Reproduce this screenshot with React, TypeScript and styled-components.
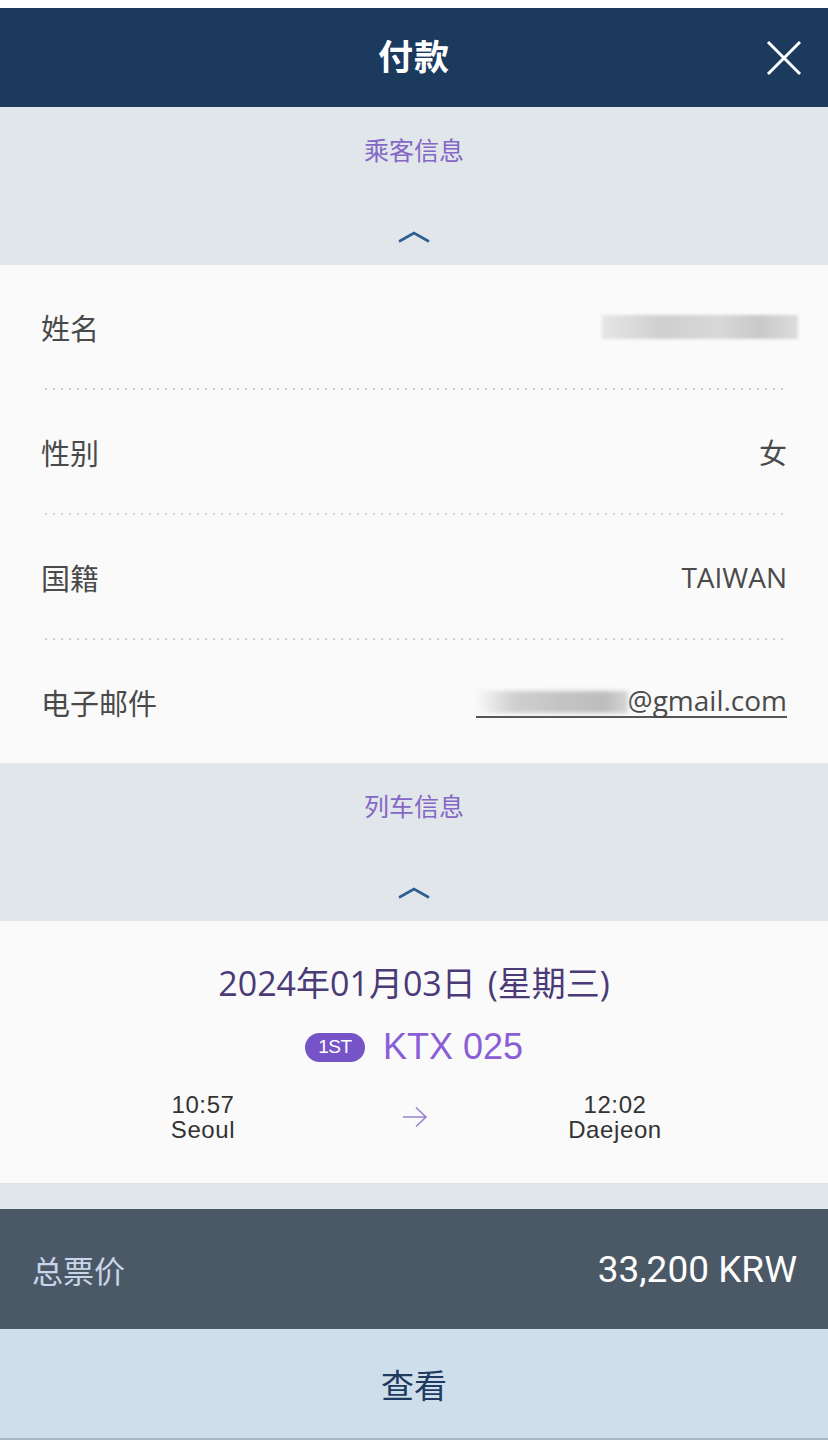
import React from "react";
import styled, { createGlobalStyle } from "styled-components";

const Global = createGlobalStyle`
  html, body { margin: 0; padding: 0; background: #ffffff; }
  body { font-family: Roboto, "Noto Sans CJK SC", sans-serif; }
  * { box-sizing: border-box; }
`;

const Page = styled.div`
  width: 828px;
  padding-top: 8px;
  background: #ffffff;
  display: flex;
  flex-direction: column;
`;

const Header = styled.header`
  position: relative;
  height: 99px;
  background: #1b3a5e;
  display: flex;
  align-items: center;
  justify-content: center;
`;

const Title = styled.h1`
  margin: -6px 0 0 0;
  color: #ffffff;
  font-size: 35px;
  font-weight: 700;
  font-family: "Noto Sans CJK SC", sans-serif;
  letter-spacing: 1px;
`;

const Close = styled.button`
  position: absolute;
  right: 26px;
  top: 32px;
  width: 36px;
  height: 36px;
  padding: 0;
  border: 0;
  background: transparent;
  display: flex;
  align-items: center;
  justify-content: center;
`;

const SectionHead = styled.div`
  height: 158px;
  background: #e1e6eb;
  display: flex;
  flex-direction: column;
  align-items: center;
  padding-top: 26px;
`;

const SectionTitle = styled.div`
  color: #8467c6;
  font-size: 25px;
  font-family: "Noto Sans CJK SC", sans-serif;
  line-height: 32px;
`;

const Chevron = styled.div`
  margin-top: 65px;
  height: 14px;
  display: flex;
  align-items: center;
`;

const InfoList = styled.div`
  background: #fafafa;
  display: flex;
  flex-direction: column;
`;

const Row = styled.div`
  height: 123px;
  display: flex;
  align-items: center;
  justify-content: space-between;
  padding: 0 41px 0 41px;
  color: #444444;
  font-size: 28px;
`;

const Label = styled.span`
  font-family: "Noto Sans CJK SC", sans-serif;
  font-size: 29px;
  color: #4a4a4a;
`;

const Value = styled.span`
  font-family: "Open Sans", "Noto Sans CJK SC", sans-serif;
  color: #4a4a4a;
`;

const Divider = styled.div`
  height: 2px;
  margin: 0 43px 0 45px;
  background-image: linear-gradient(to right, #cfcfcf 0 2px, transparent 2px 8px);
  background-size: 8px 2px;
  background-repeat: repeat-x;
`;

const NameBlur = styled.span`
  display: inline-block;
  width: 196px;
  height: 24px;
  margin-right: -11px;
  background: linear-gradient(to right, #e6e6e6, #cfcfcf 30%, #d8d8d8 60%, #c9c9c9 80%, #dcdcdc);
  filter: blur(1.5px);
`;

const Email = styled.span`
  display: inline-flex;
  align-items: center;
  border-bottom: 2px solid #555555;
  margin-top: -2px;
  font-family: "Open Sans", sans-serif;
  color: #4a4a4a;
  font-size: 28px;
  line-height: 32px;
  white-space: nowrap;
`;

const EmailBlur = styled.span`
  display: inline-block;
  width: 152px;
  height: 22px;
  margin-top: 4px;
  background: linear-gradient(to right, rgba(200,200,200,0), #cfcfcf 25%, #c4c4c4 55%, #bdbdbd 85%, #d6d6d6);
  filter: blur(2px);
`;

const TrainCard = styled.div`
  background: #fafafa;
  height: 263px;
  border-bottom: 1px solid #e3e3e3;
  display: flex;
  flex-direction: column;
  align-items: center;
  padding-top: 38px;
`;

const DateLine = styled.div`
  color: #4a3a78;
  font-size: 34px;
  line-height: 48px;
  font-family: "Open Sans", "Noto Sans CJK SC", sans-serif;
  word-spacing: 3px;
`;

const TrainLine = styled.div`
  margin-top: 20px;
  display: flex;
  align-items: center;
  gap: 18px;
`;

const Badge = styled.span`
  width: 60px;
  height: 29px;
  border-radius: 15px;
  background: #7653c6;
  color: #ffffff;
  font-family: "Liberation Sans", sans-serif;
  font-size: 19px;
  letter-spacing: -0.5px;
  display: flex;
  align-items: center;
  justify-content: center;
`;

const TrainNo = styled.span`
  color: #8a5fd6;
  font-size: 36px;
  font-family: "Liberation Sans", sans-serif;
  line-height: 40px;
`;

const Times = styled.div`
  margin-top: 25px;
  width: 100%;
  padding: 0 110px 0 100px;
  display: grid;
  grid-template-columns: 1fr 1fr 1fr;
  align-items: center;
`;

const Stop = styled.div`
  text-align: center;
  color: #333333;
  font-family: "Liberation Sans", sans-serif;
  font-size: 24px;
  letter-spacing: 0.6px;
  display: flex;
  flex-direction: column;
  align-items: center;
`;

const StopLine = styled.span`
  line-height: 25px;
`;

const ArrowCell = styled.div`
  display: flex;
  justify-content: center;
  padding-left: 12px;
`;

const Gap = styled.div`
  height: 25px;
  background: #e1e6eb;
`;

const TotalBar = styled.div`
  height: 120px;
  background: #4b5866;
  display: flex;
  align-items: center;
  justify-content: space-between;
  padding: 0 31px 0 32px;
`;

const TotalLabel = styled.span`
  color: #c9d5ea;
  font-size: 31px;
  font-family: "Noto Sans CJK SC", sans-serif;
`;

const TotalValue = styled.span`
  color: #ffffff;
  font-size: 37px;
  font-family: Roboto, sans-serif;
`;

const ViewButton = styled.button`
  height: 111px;
  border: 0;
  border-bottom: 2px solid #a9b7c4;
  background: #cfdeeb;
  color: #1e3a5f;
  font-size: 33px;
  font-family: "Noto Sans CJK SC", sans-serif;
  display: flex;
  align-items: center;
  justify-content: center;
  padding: 0;
  width: 100%;
`;

const ChevronIcon = () => (
  <svg width="32" height="12" viewBox="0 0 32 12">
    <path d="M1 10.5 L16 2 L31 10.5" fill="none" stroke="#2d5d91" strokeWidth="2.6" />
  </svg>
);

const Section = ({ title }: { title: string }) => (
  <SectionHead>
    <SectionTitle>{title}</SectionTitle>
    <Chevron>
      <ChevronIcon />
    </Chevron>
  </SectionHead>
);

export default function App() {
  return (
    <>
      <Global />
      <Page>
        <Header>
          <Title>付款</Title>
          <Close aria-label="close">
            <svg width="36" height="36" viewBox="0 0 36 36">
              <path d="M2 2 L34 34 M34 2 L2 34" stroke="#ffffff" strokeWidth="3" fill="none" />
            </svg>
          </Close>
        </Header>

        <Section title="乘客信息" />

        <InfoList>
          <Row>
            <Label>姓名</Label>
            <NameBlur />
          </Row>
          <Divider />
          <Row>
            <Label>性别</Label>
            <Value>女</Value>
          </Row>
          <Divider />
          <Row>
            <Label>国籍</Label>
            <Value>TAIWAN</Value>
          </Row>
          <Divider />
          <Row>
            <Label>电子邮件</Label>
            <Email>
              <EmailBlur />
              @gmail.com
            </Email>
          </Row>
        </InfoList>

        <Section title="列车信息" />

        <TrainCard>
          <DateLine>2024年01月03日 (星期三)</DateLine>
          <TrainLine>
            <Badge>1ST</Badge>
            <TrainNo>KTX 025</TrainNo>
          </TrainLine>
          <Times>
            <Stop>
              <StopLine>10:57</StopLine>
              <StopLine>Seoul</StopLine>
            </Stop>
            <ArrowCell>
              <svg width="26" height="22" viewBox="0 0 26 22">
                <path d="M1 11 H24 M14 1.5 L24 11 L14 20.5" fill="none" stroke="#9b82d0" strokeWidth="1.6" />
              </svg>
            </ArrowCell>
            <Stop>
              <StopLine>12:02</StopLine>
              <StopLine>Daejeon</StopLine>
            </Stop>
          </Times>
        </TrainCard>

        <Gap />

        <TotalBar>
          <TotalLabel>总票价</TotalLabel>
          <TotalValue>33,200 KRW</TotalValue>
        </TotalBar>

        <ViewButton>查看</ViewButton>
      </Page>
    </>
  );
}
